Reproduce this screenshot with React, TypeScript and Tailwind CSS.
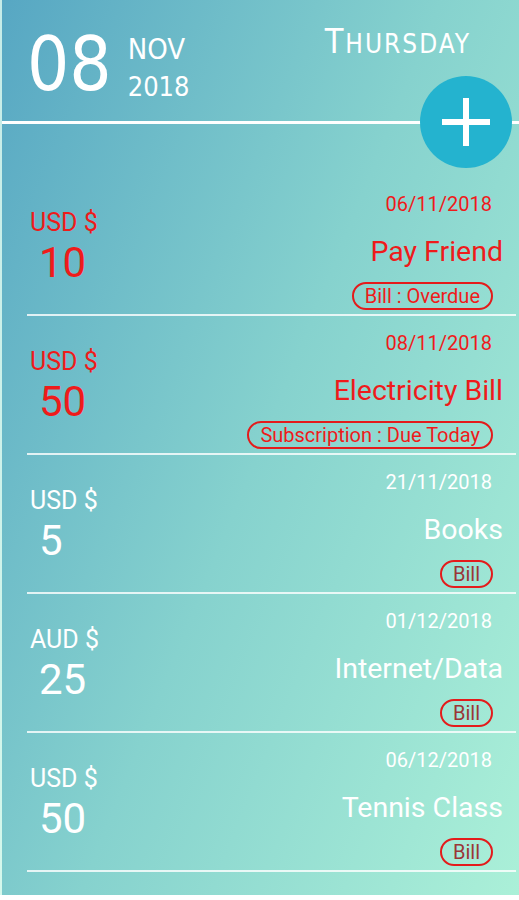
import React from 'react';

type Item = {
  currency: string;
  amount: string;
  date: string;
  title: string;
  tag: string;
  urgent: boolean;
};

const items: Item[] = [
  { currency: 'USD $', amount: '10', date: '06/11/2018', title: 'Pay Friend', tag: 'Bill : Overdue', urgent: true },
  { currency: 'USD $', amount: '50', date: '08/11/2018', title: 'Electricity Bill', tag: 'Subscription : Due Today', urgent: true },
  { currency: 'USD $', amount: '5', date: '21/11/2018', title: 'Books', tag: 'Bill', urgent: false },
  { currency: 'AUD $', amount: '25', date: '01/12/2018', title: 'Internet/Data', tag: 'Bill', urgent: false },
  { currency: 'USD $', amount: '50', date: '06/12/2018', title: 'Tennis Class', tag: 'Bill', urgent: false },
];

function Row({ item }: { item: Item }) {
  const color = item.urgent ? 'text-[#ef1b1b]' : 'text-white';
  return (
    <div className="ml-[25px] mr-[3px] h-[139px] flex justify-between border-b-2 border-white/80 font-['Roboto',sans-serif]">
      {/* Amount */}
      <div className={`pt-[33px] pl-[3px] ${color}`}>
        <div className="text-[25px] leading-none">{item.currency}</div>
        <div className="mt-[7px] pl-[9px] text-[42px] leading-none">{item.amount}</div>
      </div>

      {/* Details */}
      <div className={`pt-[17px] flex flex-col items-end ${color}`}>
        <div className="mr-[24px] text-[20px] leading-none">{item.date}</div>
        <div className="mt-[24px] mr-[13px] text-[28.5px] leading-none">{item.title}</div>
        <div
          className={`mt-[15px] mr-[23px] h-[28px] px-[11px] flex items-center rounded-full border-2 border-[#e41b1b] text-[20px] leading-none ${
            item.urgent ? 'text-[#ef1b1b]' : 'text-[#9b3636]'
          }`}
        >
          {item.tag}
        </div>
      </div>
    </div>
  );
}

export default function App() {
  return (
    <div className="w-[519px] h-[900px] bg-white">
      <div className="h-[895px] border-l-2 border-white/50 bg-[linear-gradient(112deg,#57a7c3_0%,#86d2ce_50%,#abf0d8_100%)] relative">
        {/* Header */}
        <div className="h-[177px] relative">
          <div className="h-[121px] flex items-start font-['DejaVu_Sans_Condensed','DejaVu_Sans',sans-serif] text-white">
            <div className="ml-[25px] mt-[27px] text-[74px] leading-none">08</div>
            <div className="ml-[16px] mt-[35px] flex flex-col">
              <span className="text-[29px] leading-none">NOV</span>
              <span className="mt-[9px] text-[27px] leading-none">2018</span>
            </div>
            <div className="ml-auto mr-[48px] mt-[24px] flex items-baseline tracking-[2px] leading-none">
              <span className="text-[34px]">T</span>
              <span className="text-[26px]">HURSDAY</span>
            </div>
          </div>
          <div className="h-[3px] bg-white" />

          {/* Add button */}
          <button className="absolute left-[418px] top-[76px] w-[92px] h-[92px] rounded-full bg-[#24b3cf] flex items-center justify-center">
            <svg width="50" height="50" viewBox="0 0 50 50">
              <path d="M25 1v48M1 25h48" stroke="white" strokeWidth="6" />
            </svg>
          </button>
        </div>

        {/* Reminders */}
        {items.map((item, i) => (
          <Row key={i} item={item} />
        ))}
      </div>
    </div>
  );
}
